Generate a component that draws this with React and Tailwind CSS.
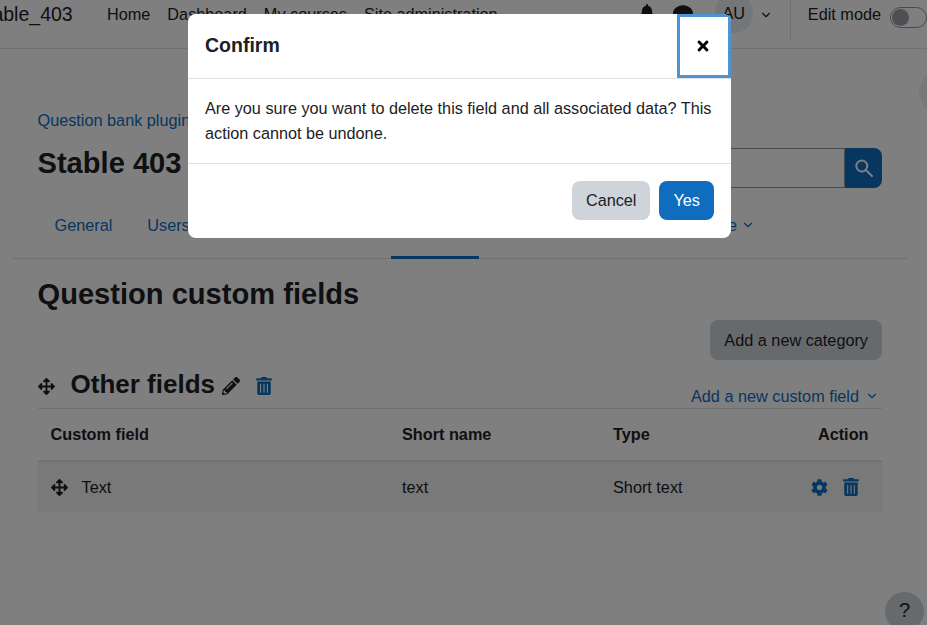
import { ChevronDown } from 'lucide-react'
import { FaArrowsAlt, FaBell, FaCog, FaComment, FaPencilAlt, FaTimes, FaTrashAlt } from 'react-icons/fa'

const navLinks = ['Home', 'Dashboard', 'My courses', 'Site administration']

const tabs = [
  { label: 'General', width: 'w-[92px]' },
  { label: 'Users', width: 'w-[78px]' },
  { label: 'Courses', width: 'w-[94px]' },
  { label: 'Grades', width: 'w-[89px]' },
  { label: 'Plugins', width: 'w-[88px]', active: true },
  { label: 'Appearance', width: 'w-[206px]' },
  { label: 'More', width: 'w-[86px]', more: true },
]

function Navbar() {
  return (
    <header className="flex h-[49px] items-start border-b border-[#dee2e6] pt-[2px] text-[#1d2125]">
      <span className="ml-[-26px] w-[133px] shrink-0 text-[19.5px] leading-[24px]">Stable_403</span>
      <nav className="flex gap-[17px] text-[16.25px] leading-[24px]">
        {navLinks.map((link) => (
          <span key={link}>{link}</span>
        ))}
      </nav>
      <div className="ml-auto flex h-[39px] items-start">
        <FaBell className="mr-[18px] mt-[2px] text-[16px]" />
        <FaComment className="mr-[22px] mt-[2px] text-[20px]" />
        <div className="mt-[-9px] flex h-[40px] w-[38px] items-center justify-center rounded-full bg-[#e9ecef] text-[16.25px]">AU</div>
        <ChevronDown size={14} strokeWidth={2} className="ml-[6px] mr-[17px] mt-[6px]" />
        <div className="mt-[-2px] h-[39px] w-px bg-[#dee2e6]" />
        <span className="ml-[17px] text-[16.25px] leading-[24px]">Edit mode</span>
        <div className="ml-[9px] mt-[5px] h-[21px] w-[37px] shrink-0 rounded-full border border-[#8f959e] bg-white p-px">
          <div className="h-[17px] w-[17px] rounded-full bg-[#9a9ea6]" />
        </div>
      </div>
    </header>
  )
}

function Tabs() {
  return (
    <div className="ml-[12px] mr-[19px] flex h-[67px] border-b border-[#dee2e6] pl-[25.5px] text-[16.25px] text-[#0f6cbf]">
      {tabs.map((tab) => (
        <div
          key={tab.label}
          className={`flex shrink-0 items-center justify-center gap-[4px] ${tab.width} ${tab.active ? 'mb-[-1px] border-b-[3px] border-[#0f6cbf]' : ''}`}
        >
          {tab.label}
          {tab.more && <ChevronDown size={14} strokeWidth={2} />}
        </div>
      ))}
    </div>
  )
}

function FieldsTable() {
  return (
    <div className="text-[16.25px] text-[#1d2125]">
      <div className="grid h-[53px] grid-cols-[351.5px_211px_1fr_auto] items-center border-b-2 border-[#dee2e6] pl-[13px] pr-[13.5px] font-bold">
        <span>Custom field</span>
        <span>Short name</span>
        <span>Type</span>
        <span>Action</span>
      </div>
      <div className="grid h-[50px] grid-cols-[351.5px_211px_1fr_auto] items-center bg-[#f2f2f2] pl-[13px] pr-[14px]">
        <span className="flex items-center gap-[14px]">
          <FaArrowsAlt className="text-[17px]" />
          Text
        </span>
        <span>text</span>
        <span>Short text</span>
        <span className="mr-[8px] flex items-center gap-[14px] text-[18px] text-[#0f6cbf]">
          <FaCog className="text-[17px]" />
          <FaTrashAlt />
        </span>
      </div>
    </div>
  )
}

function ConfirmModal() {
  return (
    <div className="absolute left-[188px] top-[14px] w-[543px] overflow-hidden rounded-[8px] bg-white text-[#1d2125]">
      <div className="flex h-[65px] items-stretch justify-between border-b border-[#dee2e6] pl-[17px]">
        <h5 className="mb-[2px] self-center text-[19.5px] font-bold leading-[24px]">Confirm</h5>
        <button className="flex h-[64px] w-[54px] items-center justify-center border-[3px] border-[#4f93d0] pr-[2px] text-[16px] text-black">
          <FaTimes />
        </button>
      </div>
      <div className="border-b border-[#dee2e6] px-[17px] py-[17px] text-[16.23px] leading-[25px]">
        Are you sure you want to delete this field and all associated data? This action cannot be undone.
      </div>
      <div className="flex h-[74px] items-center justify-end gap-[9px] px-[17px] pb-[1px] text-[16.25px]">
        <button className="h-[39px] rounded-[8px] bg-[#ced4da] px-[14px]">Cancel</button>
        <button className="h-[39px] rounded-[8px] bg-[#0f6cbf] px-[14px] text-white">Yes</button>
      </div>
    </div>
  )
}

export default function App() {
  return (
    <div className="relative h-[625px] w-[927px] overflow-hidden bg-white font-['Liberation_Sans',Arial,sans-serif]">
      <Navbar />

      <main>
        <div className="pl-[37.5px] pr-[45px] pt-[59px]">
          <div className="text-[16.25px] leading-[24px] text-[#0f6cbf]">Question bank plugins</div>
          <div className="mt-[11px] flex items-start justify-between">
            <h1 className="text-[29.1px] font-bold leading-[40px] text-[#1d2125]">Stable 403</h1>
            <div className="mt-[5px] flex h-[40px] w-[340px]">
              <div className="flex-1 rounded-l-[8px] border border-[#8f959e]" />
              <div className="flex w-[37px] items-center justify-center rounded-r-[8px] bg-[#0f6cbf] text-white">
                <svg width="18" height="18" viewBox="0 0 18 18" fill="none" stroke="currentColor" strokeWidth="2">
                  <circle cx="6.8" cy="7" r="5.5" />
                  <line x1="10.8" y1="11" x2="17" y2="17" strokeLinecap="round" />
                </svg>
              </div>
            </div>
          </div>
        </div>

        <div className="mt-[4px]">
          <Tabs />
        </div>

        <div className="pl-[37.5px] pr-[45px]">
          <h2 className="mt-[18px] text-[29.1px] font-bold leading-[34px] text-[#1d2125]">Question custom fields</h2>
          <div className="mt-[9px] flex justify-end">
            <button className="h-[40px] rounded-[8px] bg-[#ced4da] px-[14px] text-[16.25px] text-[#1d2125]">Add a new category</button>
          </div>
          <div className="flex h-[49px] items-center border-b border-[#dee2e6]">
            <FaArrowsAlt className="mt-[4px] text-[17px] text-[#1d2125]" />
            <h3 className="ml-[16px] text-[26px] font-bold leading-[32px] text-[#1d2125]">Other fields</h3>
            <FaPencilAlt className="ml-[7px] mt-[4px] text-[18px] text-[#1d2125]" />
            <FaTrashAlt className="ml-[15px] mt-[4px] text-[18px] text-[#0f6cbf]" />
            <span className="ml-auto mt-[24px] flex items-center gap-[6px] pr-[3px] text-[16.25px] text-[#0f6cbf]">
              Add a new custom field
              <ChevronDown size={14} strokeWidth={2} />
            </span>
          </div>
          <FieldsTable />
        </div>
      </main>

      {/* bits that float over the page */}
      <div className="absolute left-[919px] top-[69px] h-[46px] w-[46px] rounded-full bg-[#f0f0f0]" />
      <div className="absolute left-[885px] top-[592px] flex h-[39px] w-[39px] items-center justify-center rounded-full bg-[#ced4da] pb-[3px] text-[20px] text-[#1d2125]">?</div>

      <div className="absolute inset-0 bg-black/50" />
      <ConfirmModal />
    </div>
  )
}
